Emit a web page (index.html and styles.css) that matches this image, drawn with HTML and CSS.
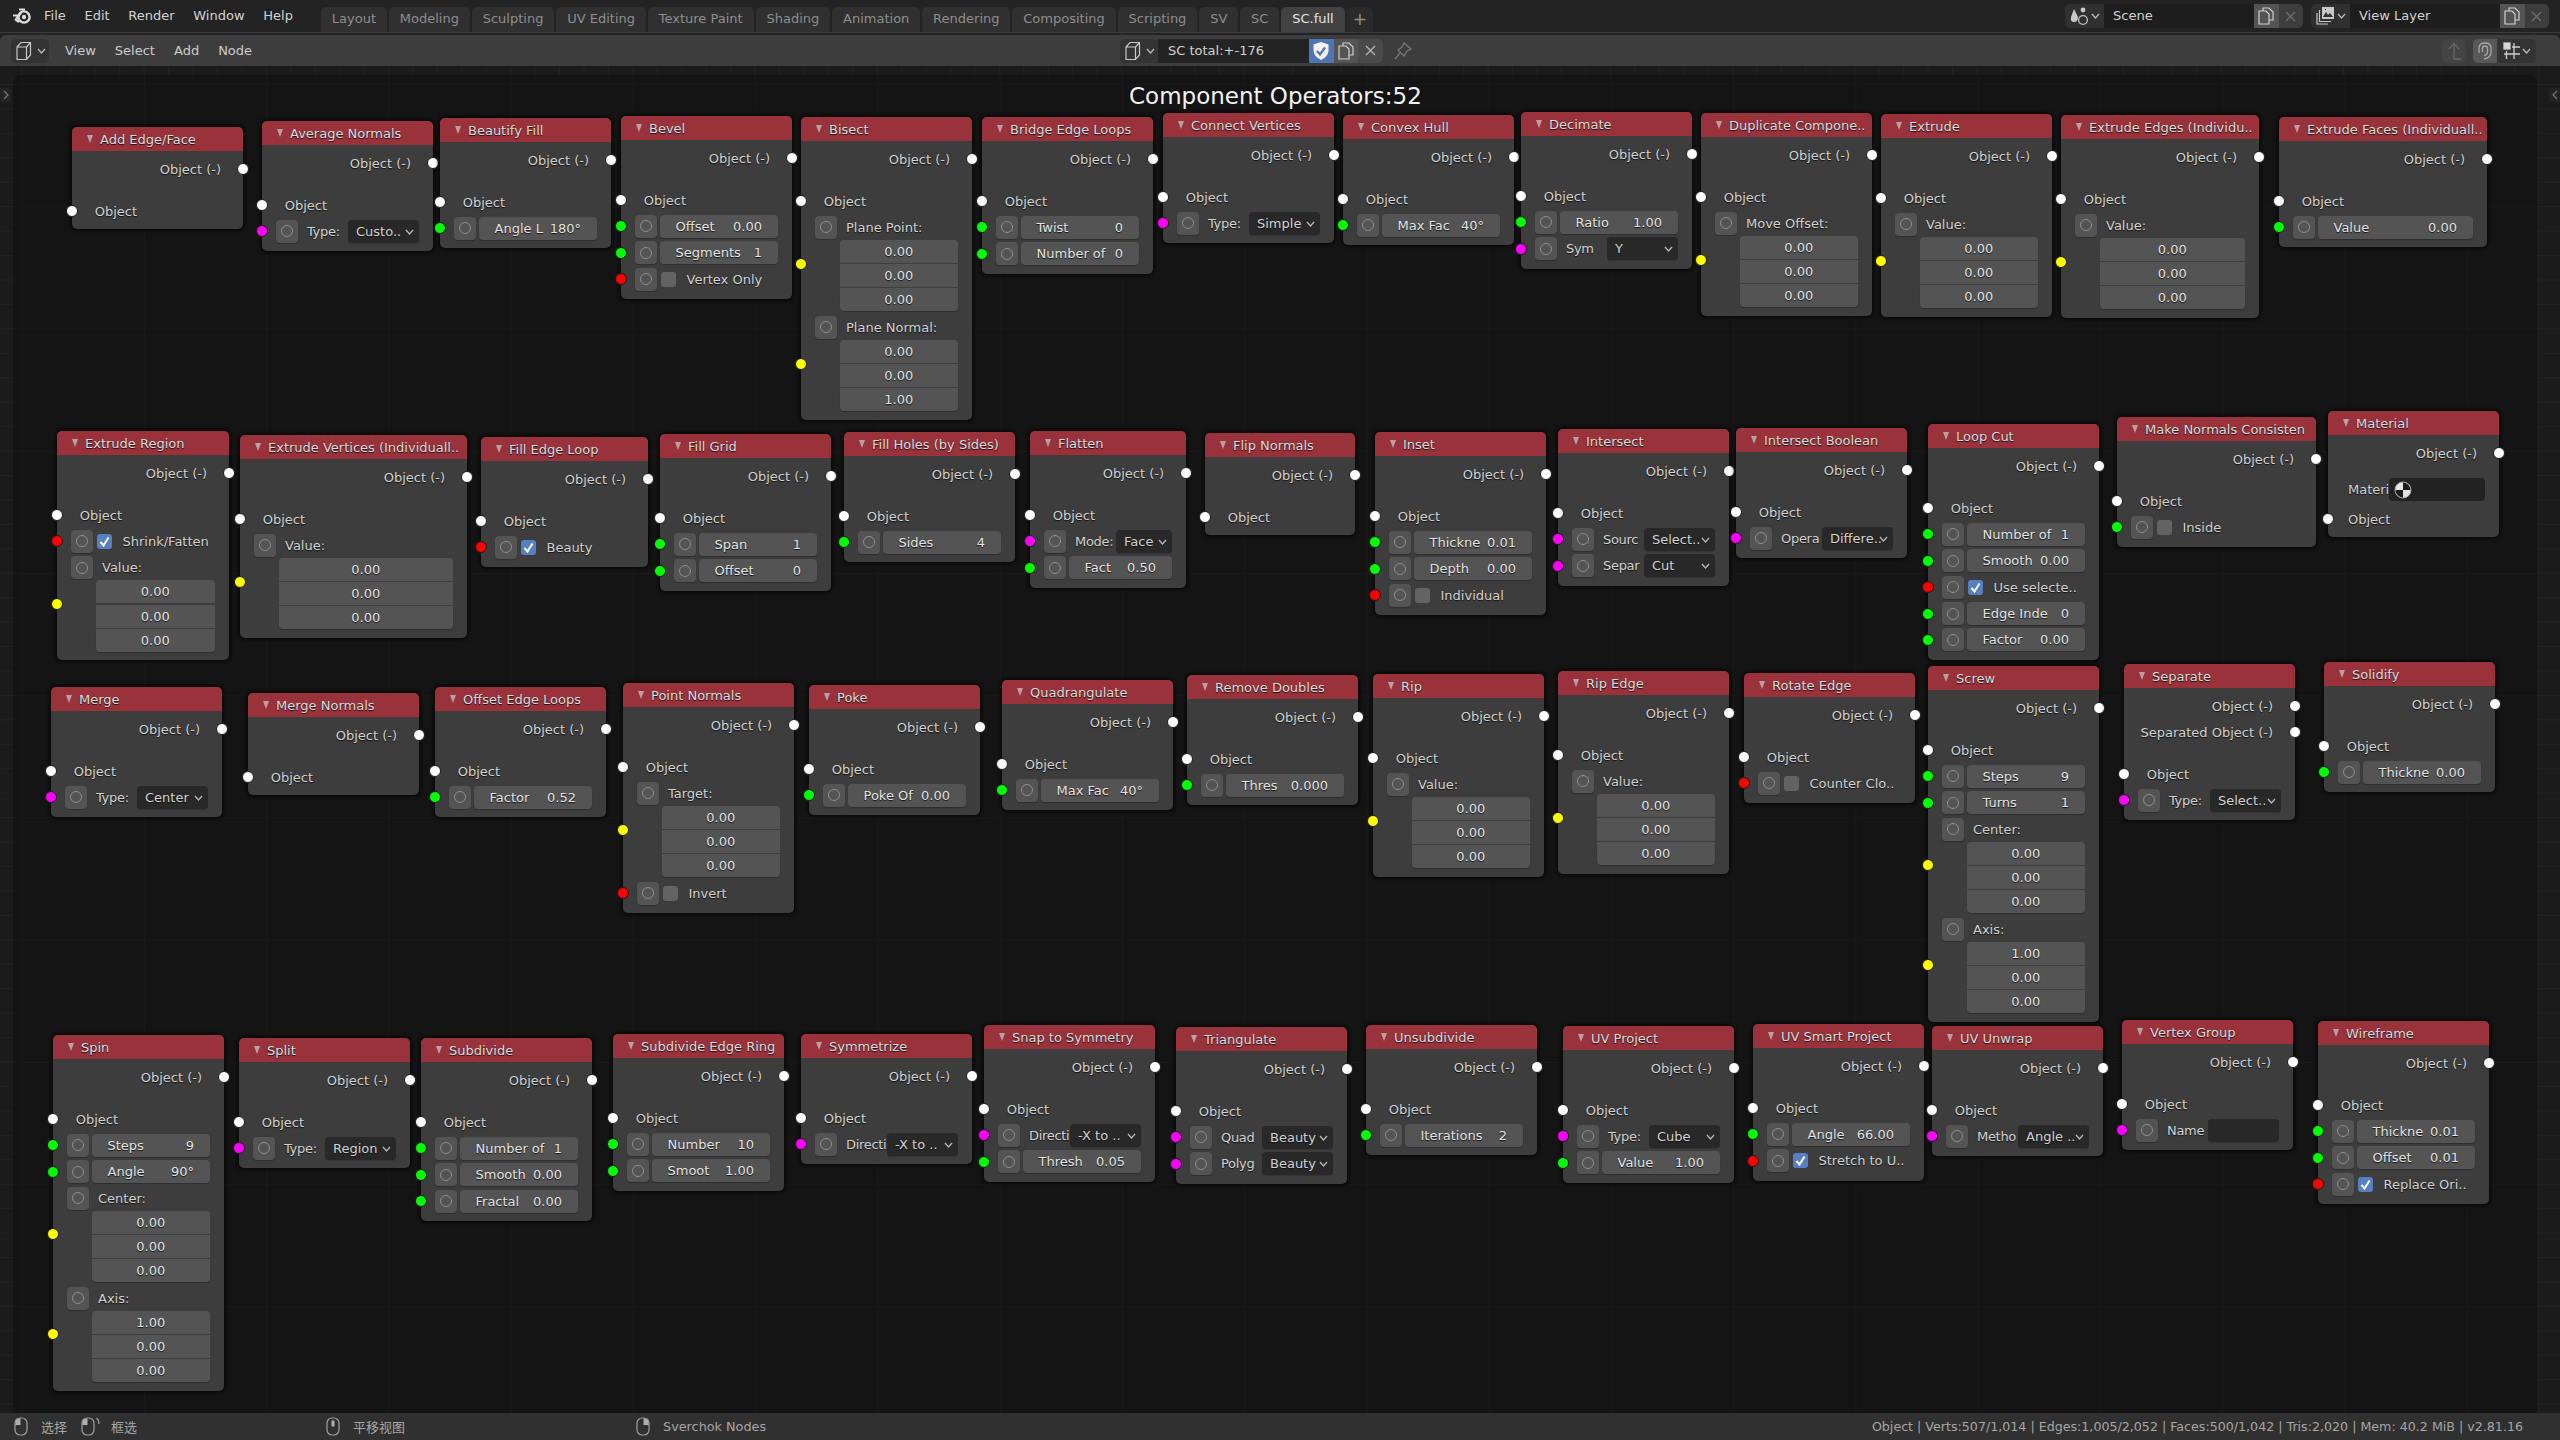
FILE: index.html
```html
<!DOCTYPE html>
<html lang="en">

<head>
    <meta charset="UTF-8">
    <title>Blender - SC total</title>
    <link rel="stylesheet" href="styles.css">
    <script src="script.js"></script>
</head>

<body>
    <!-- top bar -->
    <div class="topbar">
        <svg class="logo" width="20" height="18" viewBox="0 0 20 18">
            <circle cx="12" cy="10" r="5.6" fill="none" stroke="#dcdcdc" stroke-width="2.4" />
            <circle cx="12" cy="10" r="2.2" fill="#dcdcdc" />
            <path d="M1 8.5 L8 8.5 M4 12 L9 6 M7 2.5 L13 2.5 M3 12 L7 15" fill="none" stroke="#dcdcdc" stroke-width="2.2" />
        </svg>
        <div class="menu">
            <span>File</span><span>Edit</span><span>Render</span><span>Window</span><span>Help</span>
        </div>
        <div class="tabs">
            <span class="tab">Layout</span>
            <span class="tab">Modeling</span>
            <span class="tab">Sculpting</span>
            <span class="tab">UV Editing</span>
            <span class="tab">Texture Paint</span>
            <span class="tab">Shading</span>
            <span class="tab">Animation</span>
            <span class="tab">Rendering</span>
            <span class="tab">Compositing</span>
            <span class="tab">Scripting</span>
            <span class="tab">SV</span>
            <span class="tab">SC</span>
            <span class="tab active">SC.full</span>
            <span class="tab plus">+</span>
        </div>
        <div class="scene-groups">
            <div class="group">
                <span class="g-icon">
                    <svg width="20" height="20" viewBox="0 0 20 20">
                        <path d="M4 3 L8 11 Q8 16 4 16 Q0 16 1 11 Z" fill="#c8c8c8" />
                        <circle cx="13" cy="4" r="2.4" fill="#c8c8c8" />
                        <circle cx="13" cy="14" r="4.4" fill="none" stroke="#c8c8c8" stroke-width="1.3" />
                    </svg>
                    <svg class="chev" width="9" height="6" viewBox="0 0 9 6"><path d="M1 1 L4.5 5 L8 1" /></svg>
                </span>
                <span class="g-text">Scene</span>
                <span class="g-btn copy">
                    <svg width="16" height="18" viewBox="0 0 16 18"><path d="M5 4 V1 H11 L15 5 V13 H11 M1 4 H8 L11 7 V17 H1 Z" /></svg>
                </span>
                <span class="g-btn close">
                    <svg width="11" height="11" viewBox="0 0 11 11"><path d="M1 1 L10 10 M10 1 L1 10" /></svg>
                </span>
            </div>
            <div class="group">
                <span class="g-icon">
                    <svg width="20" height="20" viewBox="0 0 20 20">
                        <path d="M6 1 H18 V13 H6 Z" fill="#c8c8c8" />
                        <path d="M7 11 L10 6 L12 9 L14 7 L17 11 Z M9 3 H10 V4 H9 Z" fill="#303030" />
                        <path d="M3.5 4 V15.5 H15 M1 7 V18 H12" fill="none" stroke="#c8c8c8" stroke-width="1.2" />
                    </svg>
                    <svg class="chev" width="9" height="6" viewBox="0 0 9 6"><path d="M1 1 L4.5 5 L8 1" /></svg>
                </span>
                <span class="g-text">View Layer</span>
                <span class="g-btn copy">
                    <svg width="16" height="18" viewBox="0 0 16 18"><path d="M5 4 V1 H11 L15 5 V13 H11 M1 4 H8 L11 7 V17 H1 Z" /></svg>
                </span>
                <span class="g-btn close">
                    <svg width="11" height="11" viewBox="0 0 11 11"><path d="M1 1 L10 10 M10 1 L1 10" /></svg>
                </span>
            </div>
        </div>
    </div>

    <!-- node editor header -->
    <div class="header">
        <div class="hd-left">
            <span class="type-btn">
                <svg width="20" height="20" viewBox="0 0 20 20"><path d="M1 6 L5 1.5 H14.5 V14 L10.5 18.5 H1 Z M1 6 H10.5 V18.5 M10.5 6 L14.5 1.5" /></svg>
                <svg class="chev" width="9" height="6" viewBox="0 0 9 6"><path d="M1 1 L4.5 5 L8 1" /></svg>
            </span>
            <span class="hd-item">View</span>
            <span class="hd-item">Select</span>
            <span class="hd-item">Add</span>
            <span class="hd-item">Node</span>
        </div>
        <div class="tree-group">
            <span class="tg-icon">
                <svg width="20" height="20" viewBox="0 0 20 20"><path d="M1 6 L5 1.5 H14.5 V14 L10.5 18.5 H1 Z M1 6 H10.5 V18.5 M10.5 6 L14.5 1.5" /></svg>
                <svg class="chev" width="9" height="6" viewBox="0 0 9 6"><path d="M1 1 L4.5 5 L8 1" /></svg>
            </span>
            <span class="tg-text">SC total:+-176</span>
            <span class="tg-btn blue">
                <svg width="18" height="20" viewBox="0 0 18 20">
                    <path d="M9 1 L16.5 3.5 V10 Q16 15.5 9 19 Q2 15.5 1.5 10 V3.5 Z" fill="#f2f2f2" />
                    <path d="M5 10 L8 13.5 L13 6.5" fill="none" stroke="#4e76b0" stroke-width="2.2" />
                </svg>
            </span>
            <span class="tg-btn copy">
                <svg width="16" height="18" viewBox="0 0 16 18"><path d="M5 4 V1 H11 L15 5 V13 H11 M1 4 H8 L11 7 V17 H1 Z" /></svg>
            </span>
            <span class="tg-btn close">
                <svg width="11" height="11" viewBox="0 0 11 11"><path d="M1 1 L10 10 M10 1 L1 10" /></svg>
            </span>
        </div>
        <svg class="pin" width="20" height="20" viewBox="0 0 20 20"><path d="M11 2 L18 8 L14 10 L11 15 L5 9 L9 6 Z M7 12 L2 18" /></svg>
        <div class="hd-right">
            <span class="hd-btn parent">
                <svg width="16" height="20" viewBox="0 0 16 20"><path d="M8 18 V3 M3 8 L8 2.5 L13 8 M8 18 H15" /></svg>
            </span>
            <span class="hd-btn snap">
                <svg width="16" height="20" viewBox="0 0 16 20"><path d="M2 12 V7 Q2 2 8 2 Q14 2 14 7 V11 Q14 17 7 18 M5.5 11 V7 Q5.5 5 8 5 Q10.5 5 10.5 7 V11 Q10.5 14 7 14.5" /></svg>
            </span>
            <span class="hd-btn grid">
                <svg width="18" height="18" viewBox="0 0 18 18">
                    <rect x="1" y="1" width="6" height="6" fill="#d8d8d8" />
                    <path d="M11 1 V17 M3.5 9 V17 M1 12 H17 M9 5 H17" />
                </svg>
                <svg class="chev" width="9" height="6" viewBox="0 0 9 6"><path d="M1 1 L4.5 5 L8 1" /></svg>
            </span>
        </div>
    </div>

    <!-- nodes are put in by script.js -->
    <div class="editor" id="editor">
        <div class="canvas"></div>
        <div class="title">Component Operators:52</div>
        <span class="side-tab left"><svg width="6" height="10" viewBox="0 0 6 10"><path d="M1 1 L5 5 L1 9" /></svg></span>
        <span class="side-tab right"><svg width="6" height="10" viewBox="0 0 6 10"><path d="M5 1 L1 5 L5 9" /></svg></span>
    </div>

    <!-- status bar -->
    <div class="status">
        <svg class="mouse m1" width="14" height="19" viewBox="0 0 14 19">
            <rect x="1" y="1" width="12" height="17" rx="5" />
            <path class="fill" d="M1.5 8 V6 Q1.5 1.5 6.5 1.5 V8 Z" />
        </svg>
        <span class="st-text t1">选择</span>
        <svg class="mouse m2" width="20" height="19" viewBox="0 0 20 19">
            <rect x="1" y="1" width="12" height="17" rx="5" />
            <path class="fill" d="M1.5 8 V6 Q1.5 1.5 6.5 1.5 V8 Z" />
            <path d="M15.5 1 Q18 3 18 7" />
        </svg>
        <span class="st-text t2">框选</span>
        <svg class="mouse m3" width="14" height="19" viewBox="0 0 14 19">
            <rect x="1" y="1" width="12" height="17" rx="5" />
            <rect class="fill" x="5.5" y="3.5" width="3" height="6" />
        </svg>
        <span class="st-text t3">平移视图</span>
        <svg class="mouse m4" width="14" height="19" viewBox="0 0 14 19">
            <rect x="1" y="1" width="12" height="17" rx="5" />
            <path class="fill" d="M7.5 1.5 Q12.5 1.5 12.5 6 V8 H7.5 Z" />
        </svg>
        <span class="st-text t4">Sverchok Nodes</span>
        <span class="st-info">Object | Verts:507/1,014 | Edges:1,005/2,052 | Faces:500/1,042 | Tris:2,020 | Mem: 40.2 MiB | v2.81.16</span>
    </div>
</body>

</html>
```
FILE: styles.css
```css
* {
    box-sizing: border-box;
    margin: 0;
    padding: 0;
}

body {
    display: flex;
    flex-direction: column;
    width: 2560px;
    height: 1440px;
    overflow: hidden;
    background-color: #232323;
    color: #d2d2d2;
    font-family: "DejaVu Sans", "Noto Sans CJK SC", sans-serif;
    font-size: 13px;
    white-space: nowrap;
}

.chev {
    fill: none;
    stroke: #b8b8b8;
    stroke-width: 1.3;
}

/* top bar */
.topbar {
    display: flex;
    flex: 0 0 33px;
    border-bottom: 1px solid #3c3c3c;
}

.logo {
    margin: 7px 0 0 12px;
}

.menu {
    display: flex;
    gap: 18.7px;
    margin-left: 12px;
    line-height: 32px;
}

.tabs {
    display: flex;
    gap: 2px;
    align-self: flex-end;
    margin-left: 28px;
}

.tab {
    height: 25px;
    padding: 0 10.9px;
    border-radius: 5px 5px 0 0;
    background-color: #303030;
    color: #8e8e8e;
    line-height: 24px;
}

.tab.active {
    background-color: #424242;
    color: #e2e2e2;
}

.tab.plus {
    padding: 0 6px;
    font-size: 17px;
    background-color: #2a2a2a;
}

.scene-groups {
    display: flex;
    gap: 8px;
    margin: 4px 11px 0 auto;
}

.group {
    display: flex;
    height: 24px;
    border-radius: 5px;
    overflow: hidden;
}

.g-icon,
.tg-icon {
    display: flex;
    align-items: center;
    gap: 1px;
    width: 39px;
    padding-left: 5px;
    background-color: #303030;
}

.g-icon .chev,
.tg-icon .chev {
    flex: none;
}

.g-text {
    width: 150px;
    padding-left: 9px;
    background-color: #1d1d1d;
    line-height: 24px;
}

.g-btn,
.tg-btn {
    display: flex;
    align-items: center;
    justify-content: center;
    width: 24.5px;
}

.copy {
    background-color: #545454;
}

.copy svg,
.close svg {
    fill: none;
    stroke: #d0d0d0;
    stroke-width: 1.2;
}

.close {
    background-color: #3d3d3d;
}

.close svg {
    stroke: #6e6e6e;
    stroke-width: 1.4;
}

/* node editor header */
.header {
    display: flex;
    align-items: center;
    flex: 0 0 31px;
    margin-top: 2px;
    border-radius: 6px 6px 0 0;
    background-color: #3d3d3d;
}

.hd-left {
    display: flex;
    align-items: center;
    width: 1120px;
    padding-left: 11px;
}

.type-btn {
    display: flex;
    align-items: center;
    gap: 1px;
    width: 38px;
    height: 24px;
    margin-right: 16px;
    padding-left: 5px;
    border-radius: 5px;
    background-color: #333333;
}

.type-btn svg:first-child,
.tg-icon svg:first-child {
    flex: none;
    fill: none;
    stroke: #c8c8c8;
    stroke-width: 1.2;
}

.hd-item {
    margin-right: 19px;
    color: #cccccc;
}

.tree-group {
    display: flex;
    height: 24px;
    border-radius: 5px;
    overflow: hidden;
}

.tg-icon {
    width: 38px;
    background-color: #333333;
}

.tg-text {
    width: 151px;
    padding-left: 10px;
    background-color: #232323;
    line-height: 24px;
}

.tg-btn.blue {
    background-color: #4e76b0;
}

.tg-btn.close {
    background-color: #4a4a4a;
}

.tg-btn.close svg {
    stroke: #b4b4b4;
}

.pin {
    margin-left: 10px;
    fill: none;
    stroke: #777777;
    stroke-width: 1.3;
}

.hd-right {
    display: flex;
    margin-left: auto;
    padding-right: 24px;
}

.hd-btn {
    display: flex;
    align-items: center;
    justify-content: center;
    height: 24px;
}

.hd-btn svg:first-child {
    fill: none;
    stroke: #d0d0d0;
    stroke-width: 1.3;
}

.parent {
    width: 23px;
    margin-right: 8px;
    border-radius: 5px;
    background-color: #444444;
}

.parent svg:first-child {
    stroke: #686868;
}

.snap {
    width: 24px;
    border-radius: 5px 0 0 5px;
    background-color: #585858;
}

.snap svg:first-child {
    stroke: #a8a8a8;
}

.grid {
    gap: 1px;
    width: 39px;
    border-radius: 0 5px 5px 0;
    background-color: #333333;
}

/* canvas, outer strip and inner panel */
.editor {
    position: relative;
    display: flex;
    flex: 1;
    padding: 9px 23px 0 13px;
    background-color: #1b1b1b;
    background-image:
        linear-gradient(90deg, #232323 1px, transparent 1px),
        linear-gradient(#232323 1px, transparent 1px);
    background-size: 24.45px 100%, 100% 24.45px;
    background-position: 21.4px 0, 0 18px;
}

.canvas {
    flex: 1;
    border-radius: 8px 8px 0 0;
    background-color: #141414;
    background-image:
        linear-gradient(90deg, #191919 1px, transparent 1px),
        linear-gradient(#191919 1px, transparent 1px);
    background-size: 122.25px 100%, 100% 122.25px;
    background-position: 8.75px 0, 0 9px;
}

.title {
    position: absolute;
    top: 17px;
    left: 1129px;
    color: #f2f2f2;
    font-size: 23px;
    line-height: 27px;
}

.side-tab {
    position: absolute;
    top: 22px;
    display: flex;
    align-items: center;
    justify-content: center;
    width: 11px;
    height: 14px;
    background-color: #242424;
}

.side-tab svg {
    fill: none;
    stroke: #777777;
    stroke-width: 1.2;
}

.side-tab.left {
    left: 0;
    border-radius: 0 4px 4px 0;
}

.side-tab.right {
    right: 0;
    border-radius: 4px 0 0 4px;
}

/* nodes */
.node {
    position: absolute;
    border-radius: 5px;
    background-color: #3d3d3d;
    box-shadow: 0 0 3px 2px #0a0a0a;
    text-shadow: 0 1px 1px #111111;
}

.node-head {
    display: flex;
    align-items: center;
    height: 24px;
    padding-left: 15px;
    border-radius: 5px 5px 0 0;
    background-color: #9a323c;
    color: #dcdcdc;
}

.tri {
    flex: none;
    width: 0;
    height: 0;
    margin-right: 7px;
    border-top: 8px solid #b9a0a3;
    border-left: 3px solid transparent;
    border-right: 3px solid transparent;
}

.node-body {
    padding: 6.5px 14px 8.5px;
}

.row {
    position: relative;
    display: flex;
    align-items: center;
    height: 23px;
    margin-top: 3.4px;
}

.row.out {
    justify-content: flex-end;
    margin-top: 3px;
    padding-right: 8px;
}

.row.out:first-child {
    margin-top: 0;
}

.row.in {
    margin-top: 19px;
    padding-left: 8.7px;
}

.row.in:last-child {
    margin-bottom: -2px;
}

.sock {
    position: absolute;
    top: 50%;
    left: -20px;
    width: 12px;
    height: 12px;
    margin-top: -6px;
    border: 1px solid #1c1c1c;
    border-radius: 50%;
}

.out .sock {
    left: auto;
    right: -20px;
}

.white { background-color: #ffffff; }
.green { background-color: #00ff00; }
.magenta { background-color: #ff00ff; }
.red { background-color: #ff0000; }
.yellow { background-color: #ffff00; }

.prop {
    display: flex;
    flex: none;
    align-items: center;
    justify-content: center;
    width: 22px;
    height: 23px;
    border-radius: 4px;
    background-color: #545454;
    box-shadow: 0 1px 1px #2e2e2e;
}

.prop i {
    width: 12px;
    height: 12px;
    border: 1.5px solid #8e8e8e;
    border-radius: 50%;
}

.slider {
    display: flex;
    flex: 1;
    justify-content: space-between;
    height: 23px;
    margin-left: 2.5px;
    padding: 0 16px;
    border-radius: 4px;
    background-color: #545454;
    box-shadow: 0 1px 1px #2e2e2e;
    color: #e4e4e4;
    line-height: 23px;
}

.lab {
    flex: 1;
    min-width: 0;
    margin-left: 9px;
    letter-spacing: -0.3px;
}

.vec-head .lab {
    letter-spacing: 0;
}

.drop {
    position: relative;
    flex: 0 0 calc(100% - 72px);
    height: 23px;
    padding-left: 8px;
    border-radius: 4px;
    background-color: #282828;
    box-shadow: 0 1px 1px #333333;
    line-height: 23px;
}

.drop .chev {
    position: absolute;
    top: 9px;
    right: 5px;
}

.check {
    display: flex;
    flex: none;
    align-items: center;
    justify-content: center;
    width: 15px;
    height: 15px;
    margin-left: 4px;
    border-radius: 3px;
    background-color: #636363;
}

.check.on {
    background-color: #5680c2;
}

.check svg {
    fill: none;
    stroke: #ffffff;
    stroke-width: 2;
}

.check-label {
    margin-left: 10.5px;
}

.vec {
    position: relative;
}

.vec + .row,
.vec + .vec {
    margin-top: 4.4px;
}

.stack {
    margin: 1px 0 0 24.5px;
}

.val {
    height: 23px;
    margin-bottom: 1.3px;
    background-color: #545454;
    color: #e4e4e4;
    line-height: 23px;
    text-align: center;
}

.val:first-child {
    border-radius: 4px 4px 0 0;
}

.val:last-child {
    margin-bottom: 0;
    border-radius: 0 0 4px 4px;
    box-shadow: 0 1px 1px #2e2e2e;
}

/* Material row has no socket and sits closer */
.row.mat {
    margin-top: 13px;
    padding-left: 6px;
}

.row.mat + .row.in {
    margin-top: 7px;
    padding-left: 6px;
}

.mat-label {
    flex: 0 0 41px;
}

.mat-field {
    flex: 1;
    height: 23px;
    padding: 3px 0 0 5px;
    border-radius: 4px;
    background-color: #222222;
}

.mat-field svg {
    display: block;
}

/* status bar */
.status {
    display: flex;
    align-items: center;
    flex: 0 0 27px;
    background-color: #303030;
    color: #a6a6a6;
}

.mouse {
    flex: none;
    fill: none;
    stroke: #a0a0a0;
    stroke-width: 1.2;
}

.mouse .fill {
    fill: #b0b0b0;
    stroke: none;
}

.m1 { margin-left: 14px; }
.t1 { margin-left: 13px; }
.m2 { margin-left: 14px; }
.t2 { margin-left: 10px; }
.m3 { margin-left: 189px; }
.t3 { margin-left: 13px; }
.m4 { margin-left: 231px; }
.t4 { margin-left: 13px; font-size: 12.8px; }

.st-info {
    margin-left: auto;
    padding-right: 37px;
    font-size: 12.65px;
}
```
FILE: script.js
```js
// title, x, y, width (0 = the usual 171), rows
// rows: i = object input, f = slider, s = dropdown, c = checkbox, v = vector, m = material, n = name field
var NODES = [
    // first line
    ["Add Edge/Face", 72, 127, 0, ["i"]],
    ["Average Normals", 262, 121, 0, ["i", "s|Type:|Custo.."]],
    ["Beautify Fill", 440, 118, 0, ["i", "f|Angle L|180°"]],
    ["Bevel", 621, 116, 0, ["i", "f|Offset|0.00", "f|Segments|1", "c|Vertex Only|0|red"]],
    ["Bisect", 801, 117, 0, ["i", "v|Plane Point:", "v|Plane Normal:|1.00"]],
    ["Bridge Edge Loops", 982, 117, 0, ["i", "f|Twist|0", "f|Number of|0"]],
    ["Connect Vertices", 1163, 113, 0, ["i", "s|Type:|Simple"]],
    ["Convex Hull", 1343, 115, 0, ["i", "f|Max Fac|40°"]],
    ["Decimate", 1521, 112, 0, ["i", "f|Ratio|1.00", "s|Sym|Y"]],
    ["Duplicate Compone..", 1701, 113, 0, ["i", "v|Move Offset:"]],
    ["Extrude", 1881, 114, 0, ["i", "v|Value:"]],
    ["Extrude Edges (Individu..", 2061, 115, 198, ["i", "v|Value:"]],
    ["Extrude Faces (Individuall..", 2279, 117, 208, ["i", "f|Value|0.00"]],
    // second line
    ["Extrude Region", 57, 431, 172, ["i", "c|Shrink/Fatten|1|red", "v|Value:"]],
    ["Extrude Vertices (Individuall..", 240, 435, 227, ["i", "v|Value:"]],
    ["Fill Edge Loop", 481, 437, 167, ["i", "c|Beauty|1|red"]],
    ["Fill Grid", 660, 434, 0, ["i", "f|Span|1", "f|Offset|0"]],
    ["Fill Holes (by Sides)", 844, 432, 0, ["i", "f|Sides|4"]],
    ["Flatten", 1030, 431, 156, ["i", "s|Mode:|Face", "f|Fact|0.50"]],
    ["Flip Normals", 1205, 433, 150, ["i"]],
    ["Inset", 1375, 432, 0, ["i", "f|Thickne|0.01", "f|Depth|0.00", "c|Individual|0|red"]],
    ["Intersect", 1558, 429, 0, ["i", "s|Sourc|Select..", "s|Separ|Cut"]],
    ["Intersect Boolean", 1736, 428, 0, ["i", "s|Opera|Differe.."]],
    ["Loop Cut", 1928, 424, 0, ["i", "f|Number of|1", "f|Smooth|0.00", "c|Use selecte..|1|red", "f|Edge Inde|0", "f|Factor|0.00"]],
    ["Make Normals Consisten", 2117, 417, 199, ["i", "c|Inside|0|green"]],
    ["Material", 2328, 411, 0, ["m", "i"]],
    // third line
    ["Merge", 51, 687, 0, ["i", "s|Type:|Center"]],
    ["Merge Normals", 248, 693, 0, ["i"]],
    ["Offset Edge Loops", 435, 687, 0, ["i", "f|Factor|0.52"]],
    ["Point Normals", 623, 683, 0, ["i", "v|Target:", "c|Invert|0|red"]],
    ["Poke", 809, 685, 0, ["i", "f|Poke Of|0.00"]],
    ["Quadrangulate", 1002, 680, 0, ["i", "f|Max Fac|40°"]],
    ["Remove Doubles", 1187, 675, 0, ["i", "f|Thres|0.000"]],
    ["Rip", 1373, 674, 0, ["i", "v|Value:"]],
    ["Rip Edge", 1558, 671, 0, ["i", "v|Value:"]],
    ["Rotate Edge", 1744, 673, 0, ["i", "c|Counter Clo..|0|red"]],
    ["Screw", 1928, 666, 0, ["i", "f|Steps|9", "f|Turns|1", "v|Center:", "v|Axis:|1.00|first"]],
    ["Separate", 2124, 664, 0, ["o2", "i", "s|Type:|Select.."]],
    ["Solidify", 2324, 662, 0, ["i", "f|Thickne|0.00"]],
    // fourth line
    ["Spin", 53, 1035, 0, ["i", "f|Steps|9", "f|Angle|90°", "v|Center:", "v|Axis:|1.00|first"]],
    ["Split", 239, 1038, 0, ["i", "s|Type:|Region"]],
    ["Subdivide", 421, 1038, 0, ["i", "f|Number of|1", "f|Smooth|0.00", "f|Fractal|0.00"]],
    ["Subdivide Edge Ring", 613, 1034, 0, ["i", "f|Number|10", "f|Smoot|1.00"]],
    ["Symmetrize", 801, 1034, 0, ["i", "s|Directi|-X to .."]],
    ["Snap to Symmetry", 984, 1025, 0, ["i", "s|Directi|-X to ..", "f|Thresh|0.05"]],
    ["Triangulate", 1176, 1027, 0, ["i", "s|Quad|Beauty", "s|Polyg|Beauty"]],
    ["Unsubdivide", 1366, 1025, 0, ["i", "f|Iterations|2"]],
    ["UV Project", 1563, 1026, 0, ["i", "s|Type:|Cube", "f|Value|1.00"]],
    ["UV Smart Project", 1753, 1024, 0, ["i", "f|Angle|66.00", "c|Stretch to U..|1|red"]],
    ["UV Unwrap", 1932, 1026, 0, ["i", "s|Metho|Angle .."]],
    ["Vertex Group", 2122, 1020, 0, ["i", "n|Name"]],
    ["Wireframe", 2318, 1021, 0, ["i", "f|Thickne|0.01", "f|Offset|0.01", "c|Replace Ori..|1|red"]]
];

var EDITOR_TOP = 66;
var PROP = '<span class="prop"><i></i></span>';
var CHEV = '<svg class="chev" width="9" height="6" viewBox="0 0 9 6"><path d="M1 1 L4.5 5 L8 1" /></svg>';
var TICK = '<svg width="11" height="11" viewBox="0 0 11 11"><path d="M1.5 6 L4.5 9.5 L9.5 1.5" /></svg>';
var GLOBE = '<svg width="18" height="18" viewBox="0 0 18 18"><circle cx="9" cy="9" r="8" fill="#e4e4e4" stroke="#a8a8a8" />' +
    '<path d="M9 9 V1.5 A7.5 7.5 0 0 1 16.5 9 Z M9 9 V16.5 A7.5 7.5 0 0 1 1.5 9 Z" fill="#1c1c1c" /></svg>';

function sock(color) {
    return '<span class="sock ' + color + '"></span>';
}

function outRow(text) {
    return '<div class="row out">' + text + sock("white") + '</div>';
}

function rowHtml(text) {
    var p = text.split("|");
    var kind = p[0];
    if (kind == "i") {
        return '<div class="row in">Object' + sock("white") + '</div>';
    }
    if (kind == "f") {
        return '<div class="row">' + sock("green") + PROP +
            '<span class="slider"><span>' + p[1] + '</span><span>' + p[2] + '</span></span></div>';
    }
    if (kind == "s") {
        return '<div class="row">' + sock("magenta") + PROP +
            '<span class="lab">' + p[1] + '</span><span class="drop">' + p[2] + CHEV + '</span></div>';
    }
    if (kind == "n") {
        return '<div class="row">' + sock("magenta") + PROP +
            '<span class="lab">' + p[1] + '</span><span class="drop"></span></div>';
    }
    if (kind == "c") {
        var on = p[2] == "1";
        return '<div class="row">' + sock(p[3]) + PROP +
            '<span class="check' + (on ? " on" : "") + '">' + (on ? TICK : "") + '</span>' +
            '<span class="check-label">' + p[1] + '</span></div>';
    }
    if (kind == "v") {
        // z is 1.00 on a normal, x is 1.00 on the axis of screw and spin
        var vals = ["0.00", "0.00", "0.00"];
        if (p[2]) {
            vals[p[3] == "first" ? 0 : 2] = p[2];
        }
        var stack = "";
        for (var i = 0; i < 3; i++) {
            stack += '<div class="val">' + vals[i] + '</div>';
        }
        return '<div class="vec">' + sock("yellow") +
            '<div class="row vec-head">' + PROP + '<span class="lab">' + p[1] + '</span></div>' +
            '<div class="stack">' + stack + '</div></div>';
    }
    if (kind == "m") {
        return '<div class="row mat"><span class="mat-label">Materi</span>' +
            '<span class="mat-field">' + GLOBE + '</span></div>';
    }
    return "";
}

window.onload = function () {
    var editor = document.getElementById("editor");
    for (var i = 0; i < NODES.length; i++) {
        var n = NODES[i];
        var rows = n[4];
        var html = outRow("Object (-)");
        if (rows[0] == "o2") {
            html += outRow("Separated Object (-)");
            rows = rows.slice(1);
        }
        for (var j = 0; j < rows.length; j++) {
            html += rowHtml(rows[j]);
        }
        var el = document.createElement("div");
        el.className = "node";
        el.style.left = n[1] + "px";
        el.style.top = (n[2] - EDITOR_TOP) + "px";
        el.style.width = (n[3] || 171) + "px";
        el.innerHTML = '<div class="node-head"><span class="tri"></span>' + n[0] + '</div>' +
            '<div class="node-body">' + html + '</div>';
        editor.appendChild(el);
    }
};
```
